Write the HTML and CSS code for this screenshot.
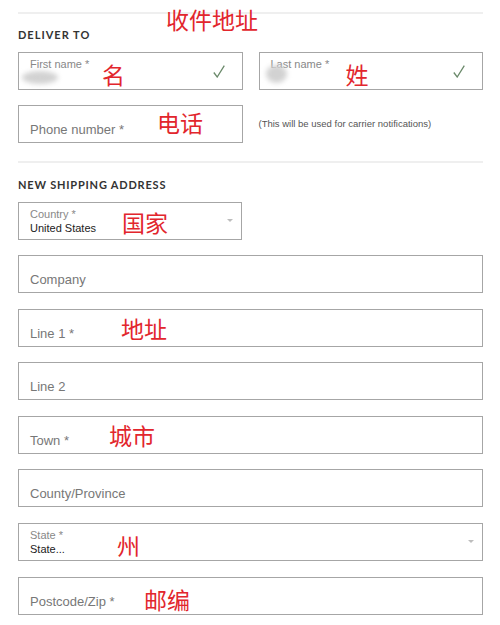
FILE: index.html
```html
<!DOCTYPE html>
<html lang="en">
<head>
<meta charset="utf-8">
<title>Deliver to</title>
<link rel="stylesheet" href="styles.css">
</head>
<body>
<div class="page">
  <span class="cn cn-title">收件地址</span>
  <section class="section">
    <hr class="rule">
    <h2 class="heading">DELIVER TO</h2>
    <div class="grid">
      <div class="field">
        <span class="label">First name *</span>
        <span class="blur blur-first"></span>
        <svg class="check" viewBox="0 0 12 13" width="12" height="13"><polyline points="0.8,7.5 4.2,12 11.3,0.6" fill="none" stroke="#6b8a6b" stroke-width="1.3"/></svg>
        <span class="cn cn-first">名</span>
      </div>
      <div class="field">
        <span class="label">Last name *</span>
        <span class="blur blur-last"></span>
        <svg class="check" viewBox="0 0 12 13" width="12" height="13"><polyline points="0.8,7.5 4.2,12 11.3,0.6" fill="none" stroke="#6b8a6b" stroke-width="1.3"/></svg>
        <span class="cn cn-last">姓</span>
      </div>
    </div>
    <div class="grid grid-phone">
      <div class="field field-ph">
        <span class="ph">Phone number *</span>
        <span class="cn cn-phone">电话</span>
      </div>
      <p class="hint">(This will be used for carrier notifications)</p>
    </div>
  </section>
  <section class="section section-address">
    <hr class="rule rule-second">
    <h2 class="heading heading-second">NEW SHIPPING ADDRESS</h2>
    <div class="stack">
      <div class="field field-half">
        <span class="label">Country *</span>
        <span class="value">United States</span>
        <span class="arrow"></span>
        <span class="cn cn-country">国家</span>
      </div>
      <div class="field field-ph"><span class="ph">Company</span></div>
      <div class="field field-ph">
        <span class="ph">Line 1 *</span>
        <span class="cn cn-line1">地址</span>
      </div>
      <div class="field field-ph"><span class="ph">Line 2</span></div>
      <div class="field field-ph">
        <span class="ph">Town *</span>
        <span class="cn cn-town">城市</span>
      </div>
      <div class="field field-ph"><span class="ph">County/Province</span></div>
      <div class="field">
        <span class="label">State *</span>
        <span class="value">State...</span>
        <span class="arrow"></span>
        <span class="cn cn-state">州</span>
      </div>
      <div class="field field-ph">
        <span class="ph">Postcode/Zip *</span>
        <span class="cn cn-zip">邮编</span>
      </div>
    </div>
  </section>
</div>
</body>
</html>
```
FILE: styles.css
```css
* {
  box-sizing: border-box;
  margin: 0;
  padding: 0;
}

html, body {
  background: #fff;
}

body {
  font-family: "Liberation Sans", Arial, sans-serif;
  color: #333;
}

.page {
  position: relative;
  width: 500px;
  padding: 12px 17px 0 18px;
}

.rule {
  border: 0;
  height: 2px;
  background: #efefef;
}

.rule-second {
  margin-top: 18px;
}

.heading {
  font-family: Lato, "Open Sans", sans-serif;
  font-weight: 700;
  font-size: 11px;
  line-height: 14px;
  letter-spacing: 1px;
  color: #333;
  margin: 14px 0 10px;
}

.heading-second {
  margin: 15px 0 9.5px;
  letter-spacing: 0.8px;
}

.grid {
  display: grid;
  grid-template-columns: 1fr 1fr;
  column-gap: 16px;
}

.grid-phone {
  margin-top: 15px;
}

.stack {
  display: flex;
  flex-direction: column;
  gap: 15.6px;
}

.field {
  position: relative;
  height: 38px;
  border: 1px solid #a6a6a6;
  padding: 5px 11px 0;
  display: flex;
  flex-direction: column;
}

.field-half {
  width: 224px;
}

.field-ph {
  justify-content: flex-end;
  padding-bottom: 4px;
}

.label {
  font-size: 11px;
  line-height: 13px;
  color: #888;
}

.value {
  font-size: 11px;
  line-height: 14px;
  color: #222;
}

.ph {
  font-size: 13px;
  line-height: 16px;
  color: #777;
}

.hint {
  align-self: center;
  font-size: 9.5px;
  line-height: 12px;
  color: #555;
}

.check {
  position: absolute;
  right: 17px;
  top: 12px;
}

.arrow {
  position: absolute;
  right: 8px;
  top: 50%;
  margin-top: -2px;
  width: 0;
  height: 0;
  border-left: 3px solid transparent;
  border-right: 3px solid transparent;
  border-top: 3px solid #bdbdbd;
}

.blur {
  position: absolute;
  background: #d2d2d2;
  border-radius: 50%;
  filter: blur(2.5px);
}

.blur-first {
  left: 3px;
  top: 18px;
  width: 36px;
  height: 13px;
}

.blur-last {
  left: 6px;
  top: 12px;
  width: 21px;
  height: 18px;
}

.cn {
  position: absolute;
  font-family: "Noto Sans CJK SC", sans-serif;
  font-size: 23px;
  line-height: 1;
  color: #e2262d;
  white-space: nowrap;
}

.cn-title { left: 166px; top: 8px; }
.cn-first { left: 83px; top: 10px; }
.cn-last { left: 86px; top: 10px; }
.cn-phone { left: 138px; top: 5px; }
.cn-country { left: 103px; top: 8px; }
.cn-line1 { left: 102px; top: 7px; }
.cn-town { left: 90px; top: 7px; }
.cn-state { left: 98px; top: 10px; }
.cn-zip { left: 125px; top: 10px; }
```
